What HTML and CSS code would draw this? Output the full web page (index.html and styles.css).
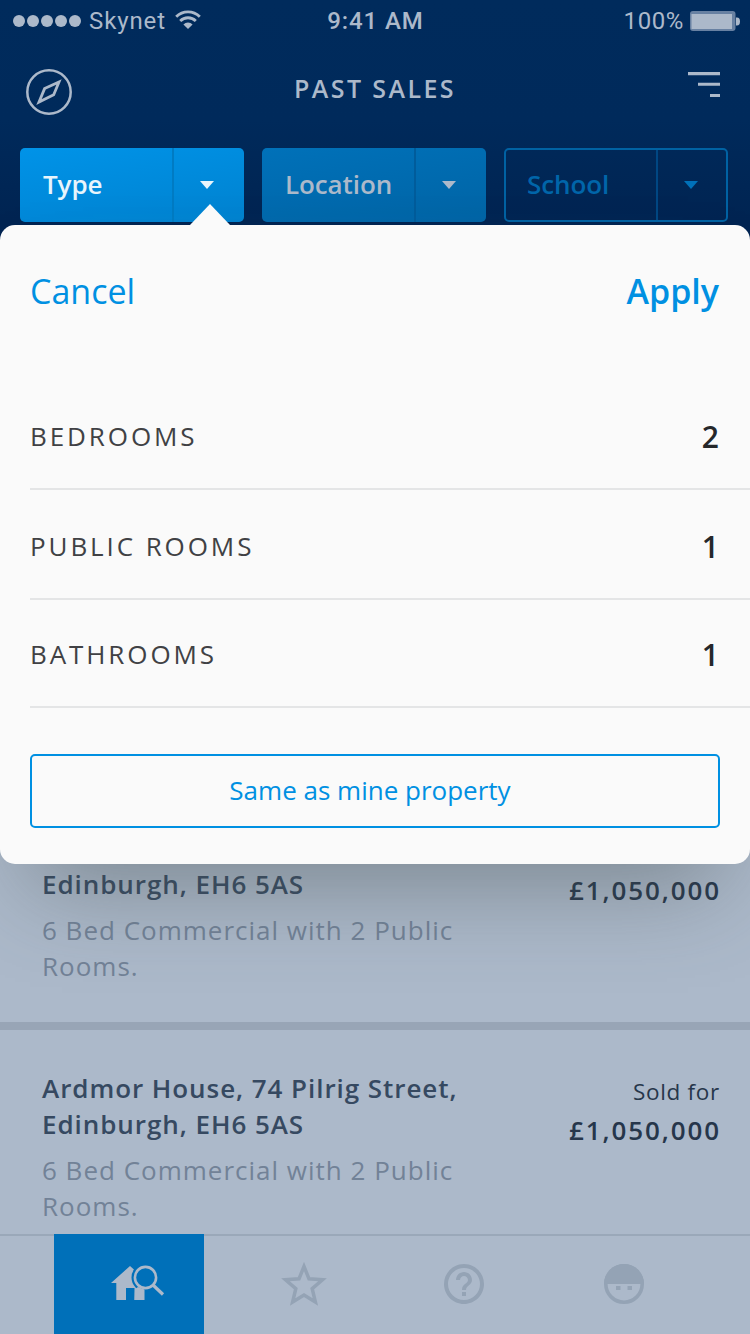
FILE: index.html
```html
<!DOCTYPE html>
<html lang="en">
<head>
<meta charset="utf-8">
<title>Past Sales</title>
<link rel="stylesheet" href="styles.css">
</head>
<body>
<div class="screen">
  <header class="header">
    <div class="status">
      <div class="carrier">
        <span class="dots"><i></i><i></i><i></i><i></i><i></i></span>
        <span class="carrier-name">Skynet</span>
        <svg class="wifi" width="26" height="20" viewBox="0 0 26 20" fill="none" stroke="currentColor" stroke-width="2.8"><path d="M1.2 6.8a16.5 16.5 0 0 1 23.6 0M5.2 11a11 11 0 0 1 15.6 0"/><path d="M13 19l-4.6-4.5a6.5 6.5 0 0 1 9.2 0z" fill="currentColor" stroke="none"/></svg>
      </div>
      <div class="clock">9:41 AM</div>
      <div class="power">
        <span class="percent">100%</span>
        <svg width="50" height="21" viewBox="0 0 50 21"><rect width="45.500" height="20" rx="3" fill="#6881a2"/><rect x="1.500" y="3" width="40.500" height="15" fill="#acb9ca"/><path d="M46 6.500h1a3 4 0 0 1 0 8h-1z" fill="#acb9ca"/></svg>
      </div>
    </div>
    <div class="titlebar">
      <svg class="compass" width="48" height="48" viewBox="0 0 48 48" fill="none" stroke="currentColor"><circle cx="24" cy="24" r="21.700" stroke-width="2.500"/><path d="M34 14L28.700 26.800 14 34 19.600 20.600z" stroke-width="2.800"/></svg>
      <h1 class="title">PAST SALES</h1>
      <svg class="sort" width="32" height="28" viewBox="0 0 32 28" fill="currentColor"><path d="M0 1h32v3.300H0zM10 11.700h22v3.100H10zM22 23h10v3.100H22z"/></svg>
    </div>
    <div class="filters">
      <div class="filter filter-active"><span class="filter-name">Type</span><span class="filter-drop"><i class="caret"></i></span></div>
      <div class="filter filter-set"><span class="filter-name">Location</span><span class="filter-drop"><i class="caret"></i></span></div>
      <div class="filter filter-empty"><span class="filter-name">School</span><span class="filter-drop"><i class="caret"></i></span></div>
    </div>
  </header>

  <main class="listings">
    <article class="listing">
      <div class="info">
        <h2 class="address">Ardmor House, 74 Pilrig Street, Edinburgh, EH6 5AS</h2>
        <p class="summary">6 Bed Commercial with 2 Public Rooms.</p>
      </div>
      <div class="sale"><span class="sold">Sold for</span><strong class="price">£1,050,000</strong></div>
    </article>
    <article class="listing">
      <div class="info">
        <h2 class="address">Ardmor House, 74 Pilrig Street, Edinburgh, EH6 5AS</h2>
        <p class="summary">6 Bed Commercial with 2 Public Rooms.</p>
      </div>
      <div class="sale"><span class="sold">Sold for</span><strong class="price">£1,050,000</strong></div>
    </article>
  </main>

  <nav class="tabs">
    <div class="tab tab-current">
      <svg width="56" height="40" viewBox="0 0 56 40"><path d="M1 20L20 3l19 17h-5v17H24.500V25H16v12H6.300V20z" fill="#acb9ca"/><circle cx="35.500" cy="14.500" r="14" fill="#0070b9"/><path d="M25 26l3-2 6.500 2.500V37h-10z" fill="#acb9ca"/><circle cx="35.500" cy="14.500" r="10.600" fill="#0070b9" stroke="#acb9ca" stroke-width="2.600"/><path d="M43 22l10 9.500" stroke="#acb9ca" stroke-width="3.200"/></svg>
    </div>
    <div class="tab">
      <svg width="48" height="48" viewBox="0 0 48 48" fill="none" stroke="currentColor" stroke-width="3.500"><path d="M24 6.500l5 12.300 13.500 1-10.300 8.800 3.200 13.400L24 35l-11.400 7 3.200-13.400L5.500 19.800l13.500-1z"/></svg>
    </div>
    <div class="tab">
      <svg width="48" height="48" viewBox="0 0 24 24" fill="currentColor"><path d="M11 18h2v-2h-2v2zm1-16C6.480 2 2 6.480 2 12s4.480 10 10 10 10-4.480 10-10S17.520 2 12 2zm0 18c-4.410 0-8-3.590-8-8s3.590-8 8-8 8 3.590 8 8-3.590 8-8 8zm0-14c-2.210 0-4 1.790-4 4h2c0-1.100.9-2 2-2s2 .9 2 2c0 2-3 1.750-3 5h2c0-2.250 3-2.500 3-5 0-2.210-1.790-4-4-4z"/></svg>
    </div>
    <div class="tab">
      <svg width="48" height="48" viewBox="0 0 48 48"><circle cx="24" cy="24" r="18.200" fill="none" stroke="currentColor" stroke-width="3.600"/><path d="M4 24a20 20 0 0 1 40 0z" fill="currentColor"/><path d="M16 26h4.500v4H16zM27.500 26H32v4h-4.500z" fill="currentColor"/></svg>
    </div>
  </nav>

  <section class="sheet">
    <div class="actions"><span class="cancel">Cancel</span><span class="apply">Apply</span></div>
    <div class="rows">
      <div class="row row-tall"><span class="label">BEDROOMS</span><span class="value">2</span></div>
      <div class="row row-tall"><span class="label">PUBLIC ROOMS</span><span class="value">1</span></div>
      <div class="row"><span class="label">BATHROOMS</span><span class="value">1</span></div>
    </div>
    <div class="same">Same as mine property</div>
  </section>
</div>
</body>
</html>
```

FILE: styles.css
```css
* { box-sizing: border-box; }
body { margin: 0; font-family: "Open Sans", "Noto Sans", sans-serif; }
h1, h2, p { margin: 0; }

.screen {
  position: relative;
  display: flex;
  flex-direction: column;
  width: 750px;
  height: 1334px;
  overflow: hidden;
  background: #acb9ca;
}

/* Header */
.header {
  flex: none;
  height: 250px;
  background: linear-gradient(#002b5c 0, #002a5b 120px, #002452 220px);
  color: #acb9ca;
}
.status {
  display: grid;
  grid-template-columns: 1fr auto 1fr;
  align-items: center;
  height: 42px;
  padding: 0 10px 0 13px;
  font-family: Roboto, sans-serif;
  font-size: 24px;
}
.carrier { display: flex; align-items: center; }
.dots { display: flex; gap: 2px; }
.dots i { width: 12px; height: 12px; border-radius: 50%; background: currentColor; }
.carrier-name { margin-left: 8px; letter-spacing: 0.9px; }
.wifi { margin: -3px 0 0 9px; }
.clock { margin-right: 2px; font-weight: 500; letter-spacing: 0.9px; }
.power { display: flex; align-items: center; justify-content: flex-end; gap: 6px; }
.percent { letter-spacing: 0.6px; }
.titlebar {
  display: flex;
  align-items: center;
  justify-content: space-between;
  height: 100px;
  padding: 0 30px 0 25px;
}
.title { font-size: 25px; font-weight: 600; letter-spacing: 2.4px; margin: -8px 0 0 -11px; }
.sort { margin-top: -14px; }
.filters { display: flex; gap: 18px; padding: 6px 20px 0; }
.filter {
  display: flex;
  width: 224px;
  height: 74px;
  border-radius: 5px;
  font-size: 26px;
  font-weight: 600;
}
.filter-name { flex: 1; padding-left: 23px; line-height: 73px; letter-spacing: -0.1px; }
.filter-drop {
  display: flex;
  align-items: center;
  justify-content: center;
  width: 72px;
  border-left: 2px solid #007bc3;
}
.caret {
  margin-right: 5px;
  border: 7px solid transparent;
  border-top: 8px solid currentColor;
  border-bottom: 0;
}
.filter-active { background: linear-gradient(170deg, #0093e8, #0082cf); color: #e8f5fc; }
.filter-set { background: linear-gradient(170deg, #0071b9, #0064a5); }
.filter-set .filter-drop { border-color: #005c9b; }
.filter-empty { border: 2px solid #0062a3; color: #0065a9; }
.filter-empty .filter-name { padding-left: 21px; line-height: 69px; }
.filter-empty .filter-drop { width: 70px; border-color: #004783; color: #0071b9; }
.filter-empty .caret { margin-right: 3px; }

/* Listings */
.listings { flex: 1; min-height: 0; overflow: hidden; padding-top: 540px; }
.listing {
  display: flex;
  justify-content: space-between;
  height: 240px;
  padding: 40px 30px 0 42px;
  border-bottom: 8px solid #98a5b6;
  font-size: 26px;
  line-height: 36px;
}
.info { width: 440px; }
.address { font-size: 26px; font-weight: 600; letter-spacing: 0.94px; color: #364961; }
.summary { margin-top: 10px; width: 430px; letter-spacing: 1px; color: #728297; }
.sale { display: flex; flex-direction: column; align-items: flex-end; padding-top: 4px; color: #26364b; }
.sold { font-size: 22.5px; line-height: 35px; letter-spacing: 0.7px; }
.price { margin-right: -1px; font-weight: 600; line-height: 43px; letter-spacing: 1.9px; }

/* Tab bar */
.tabs {
  flex: none;
  display: flex;
  gap: 10px;
  height: 100px;
  padding-left: 54px;
  border-top: 2px solid #9aa8b9;
  color: #94a3b5;
}
.tab { display: flex; align-items: center; justify-content: center; width: 150px; padding-bottom: 2px; }
.tab-current { margin: -2px 15px 0 0; padding: 0 0 2px 18px; background: #0070b9; }

/* Filter sheet */
.sheet {
  position: absolute;
  top: 225px;
  left: 0;
  width: 750px;
  height: 639px;
  border-radius: 15px;
  background: #fafafa;
  box-shadow: 0 50px 90px -30px rgba(70, 80, 80, 0.48);
  color: #0090e2;
}
.sheet::before {
  content: "";
  position: absolute;
  top: -21px;
  left: 190px;
  border: 20px solid transparent;
  border-top: 0;
  border-bottom: 21px solid #fafafa;
}
.actions { display: flex; justify-content: space-between; padding: 40px 31px 0 30px; font-size: 34px; line-height: 52px; }
.apply { font-weight: 600; }
.rows { margin: 63px 0 0 30px; color: #404144; }
.row {
  display: flex;
  align-items: center;
  justify-content: space-between;
  height: 108px;
  padding: 2px 31px 0 0;
  border-bottom: 2px solid #e4e5e6;
}
.row-tall { height: 110px; padding-top: 4px; }
.label { font-size: 26px; letter-spacing: 2.9px; }
.value { font-size: 30px; font-weight: 600; color: #25272a; }
.same {
  margin: 46px 30px 0;
  height: 74px;
  padding-right: 10px;
  border: 2px solid #0090e2;
  border-radius: 5px;
  font-size: 26px;
  line-height: 69px;
  text-align: center;
}
```
